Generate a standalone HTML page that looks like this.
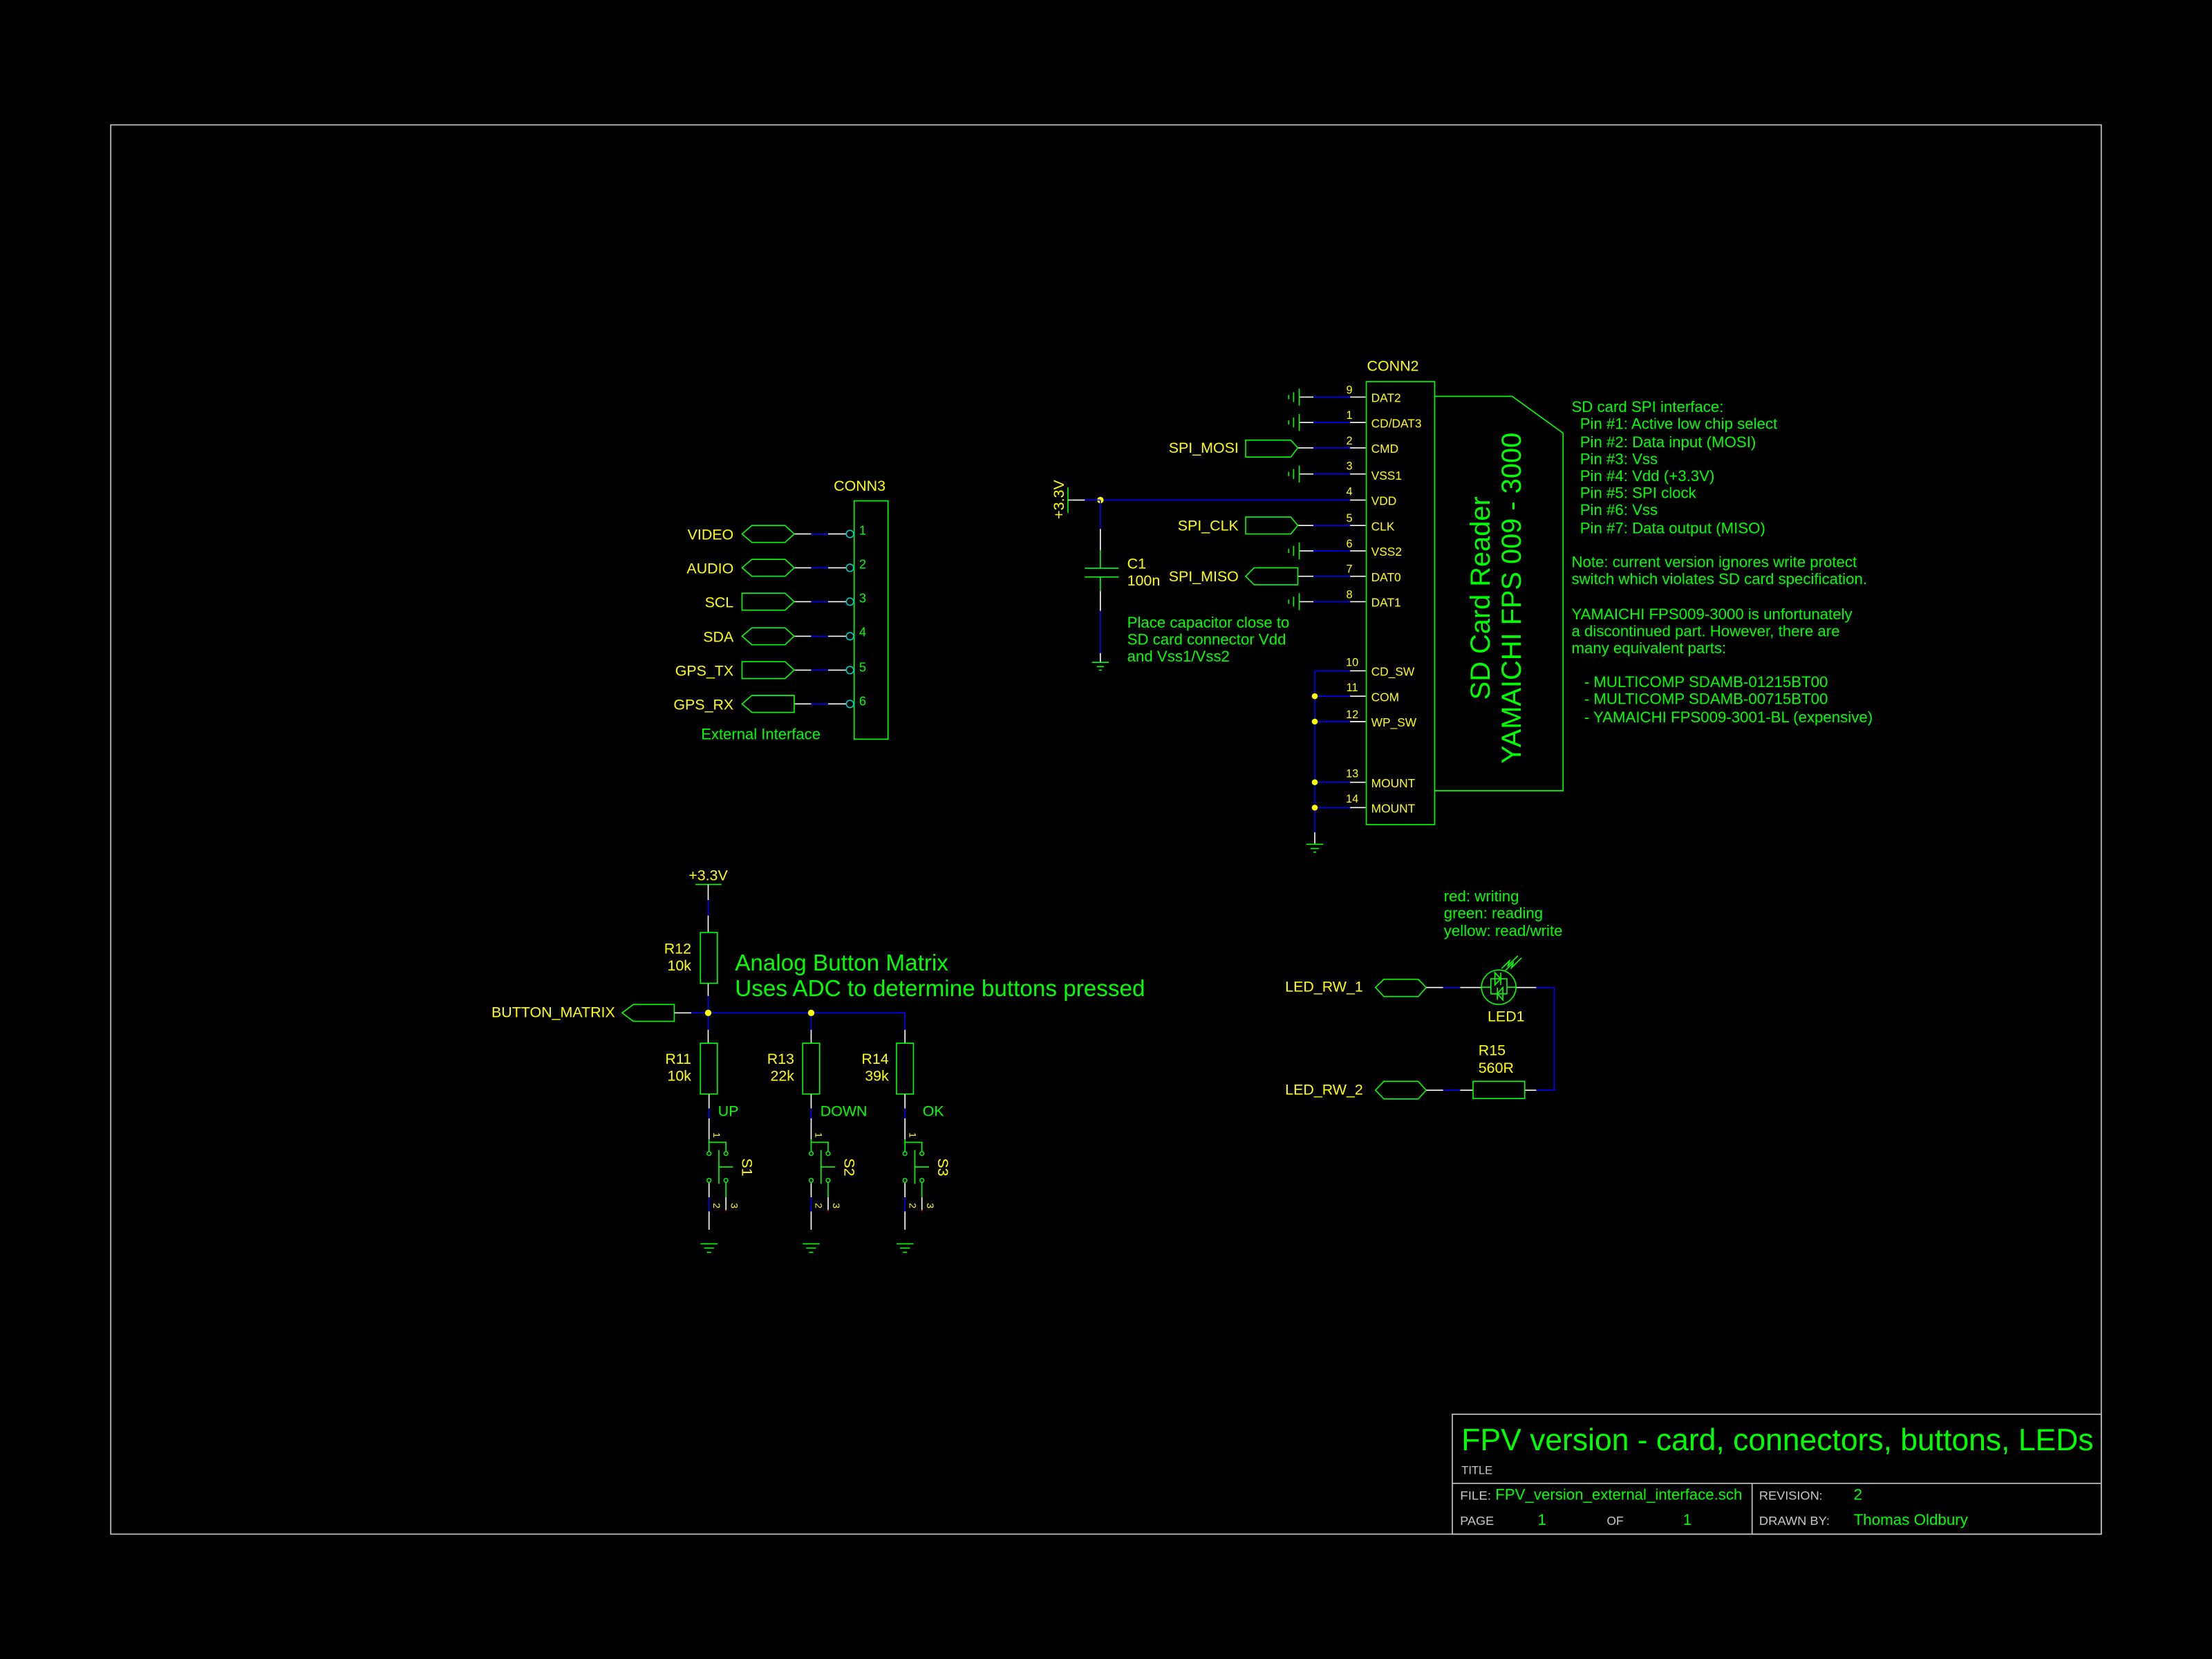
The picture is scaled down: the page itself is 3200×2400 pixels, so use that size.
<!DOCTYPE html>
<html><head><meta charset="utf-8"><style>
html,body{margin:0;padding:0;background:#000;}
svg{display:block;}
text{font-family:"Liberation Sans",sans-serif;}
.y{fill:#ffff00;}
.g{fill:#00ff00;}
.gr{fill:#c8c8c8;}
</style></head><body>
<svg width="3200" height="2400" viewBox="0 0 1568 1176" xmlns="http://www.w3.org/2000/svg">
<rect width="1568" height="1176" fill="#000"/>
<rect x="78.5" y="88.5" width="1411" height="999" fill="none" stroke="#c8c8c8" stroke-width="0.8"/>
<g stroke="#c8c8c8" stroke-width="0.8" fill="none">
<rect x="1029.5" y="1002.5" width="460" height="85"/>
<line x1="1029.5" y1="1051.5" x2="1489.5" y2="1051.5"/>
<line x1="1242" y1="1051.5" x2="1242" y2="1087.5"/>
</g>
<text x="1036" y="1028" class="g" font-size="22" textLength="448" lengthAdjust="spacingAndGlyphs">FPV version - card, connectors, buttons, LEDs</text>
<text x="1036" y="1045" class="gr" font-size="8" textLength="22" lengthAdjust="spacingAndGlyphs">TITLE</text>
<text x="1035" y="1063" class="gr" font-size="8.5" textLength="22" lengthAdjust="spacingAndGlyphs">FILE:</text>
<text x="1060" y="1063" class="g" font-size="11" textLength="175" lengthAdjust="spacingAndGlyphs">FPV_version_external_interface.sch</text>
<text x="1247" y="1063" class="gr" font-size="8.5" textLength="45" lengthAdjust="spacingAndGlyphs">REVISION:</text>
<text x="1314" y="1063" class="g" font-size="11">2</text>
<text x="1035" y="1081" class="gr" font-size="8.5" textLength="24" lengthAdjust="spacingAndGlyphs">PAGE</text>
<text x="1090" y="1081" class="g" font-size="11">1</text>
<text x="1139" y="1081" class="gr" font-size="8.5">OF</text>
<text x="1193" y="1081" class="g" font-size="11">1</text>
<text x="1247" y="1081" class="gr" font-size="8.5" textLength="50" lengthAdjust="spacingAndGlyphs">DRAWN BY:</text>
<text x="1314" y="1081" class="g" font-size="11" textLength="81" lengthAdjust="spacingAndGlyphs">Thomas Oldbury</text>

<text x="969" y="263" class="y" font-size="10.5">CONN2</text>
<rect x="968.5" y="270.5" width="48.5" height="314" fill="none" stroke="#00ff00" stroke-width="0.8"/>
<polyline points="1017,281 1072,281 1108,307 1108,560.5 1017,560.5" fill="none" stroke="#00ff00" stroke-width="0.8"/>
<text transform="translate(1056,424) rotate(-90)" text-anchor="middle" class="g" font-size="19.5">SD Card Reader</text>
<text transform="translate(1078,424) rotate(-90)" text-anchor="middle" class="g" font-size="19.5">YAMAICHI FPS 009 - 3000</text>

<g font-size="8.5" class="y">
<text x="972" y="285">DAT2</text>
<text x="972" y="303">CD/DAT3</text>
<text x="972" y="321">CMD</text>
<text x="972" y="340">VSS1</text>
<text x="972" y="358">VDD</text>
<text x="972" y="376">CLK</text>
<text x="972" y="394">VSS2</text>
<text x="972" y="412">DAT0</text>
<text x="972" y="430">DAT1</text>
<text x="972" y="479">CD_SW</text>
<text x="972" y="497">COM</text>
<text x="972" y="515">WP_SW</text>
<text x="972" y="558">MOUNT</text>
<text x="972" y="576">MOUNT</text>
</g>
<g font-size="8" class="y" text-anchor="middle">
<text x="956.5" y="279">9</text>
<text x="956.5" y="297">1</text>
<text x="956.5" y="315">2</text>
<text x="956.5" y="333">3</text>
<text x="956.5" y="351">4</text>
<text x="956.5" y="370">5</text>
<text x="956.5" y="388">6</text>
<text x="956.5" y="406">7</text>
<text x="956.5" y="424">8</text>
<text x="958.5" y="472">10</text>
<text x="958.5" y="490">11</text>
<text x="958.5" y="509">12</text>
<text x="958.5" y="551">13</text>
<text x="958.5" y="569">14</text>
</g>
<g stroke-width="0.8">
<g stroke="#ffffff">
<path d="M957 281.5H968M957 299.5H968M957 317.5H968M957 336H968M957 354.5H968M957 372.5H968M957 390.5H968M957 408.5H968M957 426.5H968M957 475.5H968M957 493.5H968M957 511.5H968M957 554.5H968M957 572.5H968"/>
<path d="M921 281.5H931M921 299.5H931M921 336H931M921 390.5H931M921 426.5H931M920 317.5H931M920 372.5H931M920 408.5H931"/>
</g>
<g stroke="#0000ff">
<path d="M931 281.5H957M931 299.5H957M931 317.5H957M931 336H957M931 372.5H957M931 390.5H957M931 408.5H957M931 426.5H957"/>
<path d="M780 354.5H957"/>
<path d="M932 475.5H957M932 493.5H957M932 511.5H957M932 554.5H957M932 572.5H957"/>
<path d="M932 475.5V590"/>
</g>
<g stroke="#00ff00">
<path d="M921 275.5v12M917 278v7M913.5 280v3"/>
<path d="M921 293.5v12M917 296v7M913.5 298v3"/>
<path d="M921 330v12M917 332.5v7M913.5 334.5v3"/>
<path d="M921 384.5v12M917 387v7M913.5 389v3"/>
<path d="M921 420.5v12M917 423v7M913.5 425v3"/>
</g>
<path d="M932 590V598" stroke="#ffffff"/>
<g stroke="#00ff00"><path d="M926 598.5h12M929 601.5h6M931 604h2"/></g>
</g>
<g fill="#ffff00">
<circle cx="932" cy="493.5" r="2.1"/><circle cx="932" cy="511.5" r="2.1"/><circle cx="932" cy="554.5" r="2.1"/><circle cx="932" cy="572.5" r="2.1"/>
<circle cx="780" cy="354.5" r="2.3"/>
</g>
<g fill="none" stroke="#00ff00" stroke-width="0.8">
<polygon points="883,312 915,312 920,317.5 915,324 883,324"/>
<polygon points="883,366.5 915,366.5 920,372.5 915,378.5 883,378.5"/>
<polygon points="883,408.5 889,402.5 920,402.5 920,414.5 889,414.5"/>
</g>
<g font-size="10.5" class="y" text-anchor="end">
<text x="878" y="321">SPI_MOSI</text>
<text x="878" y="376">SPI_CLK</text>
<text x="878" y="412">SPI_MISO</text>
</g>
<g stroke-width="0.8">
<path d="M757 345.5V363.5" stroke="#00ff00"/>
<path d="M757 354.5H769" stroke="#ffffff"/>
<path d="M769 354.5H780" stroke="#0000ff"/>
<path d="M780 354.5V375M780 433V463" stroke="#0000ff"/>
<path d="M780 375V390M780 419V433M780 463V469.5" stroke="#ffffff"/>
<path d="M780 390V402.8M780 409V419" stroke="#00ff00"/>
<path d="M769 402.8H793M769 409H793" stroke="#00ff00"/>
<path d="M774 469.5H786M777.5 472.5H782.5M779 475H781" stroke="#00ff00"/>
</g>
<text transform="translate(754,354) rotate(-90)" text-anchor="middle" class="y" font-size="10.5">+3.3V</text>
<text x="799" y="403" class="y" font-size="10.5">C1</text>
<text x="799" y="415" class="y" font-size="10.5">100n</text>
<g font-size="10.9" class="g">
<text x="799" y="445">Place capacitor close to</text>
<text x="799" y="457">SD card connector Vdd</text>
<text x="799" y="469">and Vss1/Vss2</text>
</g>
<g font-size="10.9" class="g" style="white-space:pre">
<text x="1114" y="292">SD card SPI interface:</text>
<text x="1120" y="304">Pin #1: Active low chip select</text>
<text x="1120" y="317">Pin #2: Data input (MOSI)</text>
<text x="1120" y="329">Pin #3: Vss</text>
<text x="1120" y="341">Pin #4: Vdd (+3.3V)</text>
<text x="1120" y="353">Pin #5: SPI clock</text>
<text x="1120" y="365">Pin #6: Vss</text>
<text x="1120" y="378">Pin #7: Data output (MISO)</text>
<text x="1114" y="402">Note: current version ignores write protect</text>
<text x="1114" y="414">switch which violates SD card specification.</text>
<text x="1114" y="439">YAMAICHI FPS009-3000 is unfortunately</text>
<text x="1114" y="451">a discontinued part. However, there are</text>
<text x="1114" y="463">many equivalent parts:</text>
<text x="1123" y="487">- MULTICOMP SDAMB-01215BT00</text>
<text x="1123" y="499">- MULTICOMP SDAMB-00715BT00</text>
<text x="1123" y="512">- YAMAICHI FPS009-3001-BL (expensive)</text>
</g>

<text x="591" y="348" class="y" font-size="10.5">CONN3</text>
<rect x="605.5" y="355" width="24" height="169" fill="none" stroke="#00ff00" stroke-width="0.8"/>
<g stroke-width="0.8">
<g stroke="#ffffff"><path d="M563 378.5H575M587 378.5H599.5M563 402.5H575M587 402.5H599.5M563 426.5H575M587 426.5H599.5M563 451H575M587 451H599.5M563 475H575M587 475H599.5M563 499H575M587 499H599.5"/></g>
<g stroke="#0000ff"><path d="M575 378.5H587M575 402.5H587M575 426.5H587M575 451H587M575 475H587M575 499H587"/></g>
<g fill="none" stroke="#00c8c8"><circle cx="602.5" cy="378.5" r="2.6"/><circle cx="602.5" cy="402.5" r="2.6"/><circle cx="602.5" cy="426.5" r="2.6"/><circle cx="602.5" cy="451" r="2.6"/><circle cx="602.5" cy="475" r="2.6"/><circle cx="602.5" cy="499" r="2.6"/></g>
<g fill="none" stroke="#00ff00">
<polygon points="526,378.5 533,372.5 556.5,372.5 563,378.5 556.5,384.5 533,384.5"/>
<polygon points="526,402.5 533,396.5 556.5,396.5 563,402.5 556.5,408.5 533,408.5"/>
<polygon points="526,420.5 556.5,420.5 563,426.5 556.5,432.5 526,432.5"/>
<polygon points="526,451 533,445 556.5,445 563,451 556.5,457 533,457"/>
<polygon points="526,469 556.5,469 563,475 556.5,481 526,481"/>
<polygon points="526,499 533,493 563,493 563,505 533,505"/>
</g>
</g>
<g font-size="9" class="g">
<text x="609" y="379">1</text><text x="609" y="403">2</text><text x="609" y="427">3</text><text x="609" y="451">4</text><text x="609" y="476">5</text><text x="609" y="500">6</text>
</g>
<g font-size="10.5" class="y" text-anchor="end">
<text x="520" y="382.5">VIDEO</text>
<text x="520" y="406.5">AUDIO</text>
<text x="520" y="430.5">SCL</text>
<text x="520" y="455">SDA</text>
<text x="520" y="479">GPS_TX</text>
<text x="520" y="503">GPS_RX</text>
</g>
<text x="497" y="524" class="g" font-size="10.8">External Interface</text>

<text x="502" y="624" text-anchor="middle" class="y" font-size="10.5">+3.3V</text>
<g stroke-width="0.8">
<path d="M493 627H511.5" stroke="#00ff00"/>
<path d="M502 627V638M502 649V661M502 697V706" stroke="#ffffff"/>
<path d="M502 638V649M502 706V718" stroke="#0000ff"/>
<rect x="496.5" y="661" width="12" height="36" fill="none" stroke="#00ff00"/>
<polygon points="441,718 449,712 478,712 478,724 449,724" fill="none" stroke="#00ff00"/>
<path d="M478 718H490" stroke="#ffffff"/>
<path d="M490 718H641.5V730M502 718V730M575 718V730" stroke="#0000ff"/>
<path d="M502 730V739.5M575 730V739.5M641.5 730V739.5" stroke="#ffffff"/>
<g fill="none" stroke="#00ff00">
<rect x="496.5" y="739.5" width="12" height="36"/>
<rect x="569" y="739.5" width="12" height="36"/>
<rect x="635.5" y="739.5" width="12" height="36"/>
</g>
</g>
<g fill="#ffff00"><circle cx="502" cy="718" r="2.3"/><circle cx="575" cy="718" r="2.3"/></g>
<text x="521" y="688" class="g" font-size="16.3">Analog Button Matrix</text>
<text x="521" y="706" class="g" font-size="16.3">Uses ADC to determine buttons pressed</text>
<text x="436" y="721" text-anchor="end" class="y" font-size="10.5">BUTTON_MATRIX</text>
<g font-size="10.5" class="y" text-anchor="end">
<text x="490" y="676">R12</text><text x="490" y="688">10k</text>
<text x="490" y="754">R11</text><text x="490" y="766">10k</text>
<text x="563" y="754">R13</text><text x="563" y="766">22k</text>
<text x="630" y="754">R14</text><text x="630" y="766">39k</text>
</g>
<g font-size="10.5" class="g">
<text x="509" y="791">UP</text>
<text x="581.5" y="791">DOWN</text>
<text x="654" y="791">OK</text>
</g>

<defs>
<g id="sw">
<path d="M0 0V10M0 17V32M0 63V73M0 83V96" stroke="#ffffff" stroke-width="0.8"/>
<path d="M0 10V17M0 73V83" stroke="#0000ff" stroke-width="0.8"/>
<path d="M0 32V40.5M0 34H12V40.5M0 62V63M12 62V73" stroke="#00ff00" stroke-width="0.8" fill="none"/>
<path d="M12 73V82" stroke="#ffffff" stroke-width="0.8"/>
<path d="M12 82V83" stroke="#ff0000" stroke-width="0.8"/>
<circle cx="0" cy="42" r="1.4" fill="none" stroke="#00ff00" stroke-width="0.7"/>
<circle cx="12" cy="42" r="1.4" fill="none" stroke="#00ff00" stroke-width="0.7"/>
<circle cx="0" cy="61" r="1.4" fill="none" stroke="#00ff00" stroke-width="0.7"/>
<circle cx="12" cy="61" r="1.4" fill="none" stroke="#00ff00" stroke-width="0.7"/>
<path d="M7 39.5V63.5M7 51.5H17" stroke="#00ff00" stroke-width="0.8"/>
<path d="M-6 106H6M-3.5 109H3.5M-1.5 112H1.5" stroke="#00ff00" stroke-width="0.8"/>
<text transform="translate(3,27) rotate(90)" class="y" font-size="7">1</text>
<text transform="translate(3,77) rotate(90)" class="y" font-size="7">2</text>
<text transform="translate(15.5,77) rotate(90)" class="y" font-size="7">3</text>
</g>
</defs>
<use href="#sw" x="502.6" y="775.7"/>
<use href="#sw" x="575" y="775.7"/>
<use href="#sw" x="641.5" y="775.7"/>
<g font-size="10.5" class="y">
<text transform="translate(526,821) rotate(90)">S1</text>
<text transform="translate(598.5,821) rotate(90)">S2</text>
<text transform="translate(665,821) rotate(90)">S3</text>
</g>

<g font-size="10.9" class="g">
<text x="1023.5" y="639">red: writing</text>
<text x="1023.5" y="651">green: reading</text>
<text x="1023.5" y="663.5">yellow: read/write</text>
</g>
<text x="911" y="703" class="y" font-size="10.5">LED_RW_1</text>
<text x="911" y="776" class="y" font-size="10.5">LED_RW_2</text>
<text x="1054.5" y="724" class="y" font-size="10.5">LED1</text>
<text x="1048" y="748" class="y" font-size="10.5">R15</text>
<text x="1048" y="760.5" class="y" font-size="10.5">560R</text>
<g stroke-width="0.8" fill="none">
<polygon points="975,700 981,694.2 1005.3,694.2 1011,700 1005.3,706.4 981,706.4" stroke="#00ff00"/>
<polygon points="975,772.8 981,766.5 1005.3,766.5 1011,772.8 1005.3,779 981,779" stroke="#00ff00"/>
<path d="M1011 700H1023M1035 700H1050M1074.5 700H1089M1011 772.8H1023M1035 772.8H1044.2M1080.8 772.8H1089" stroke="#ffffff"/>
<path d="M1023 700H1035M1089 700H1101.7V772.8H1089M1023 772.8H1035" stroke="#0000ff"/>
<rect x="1044.2" y="766.5" width="36.6" height="12.2" stroke="#00ff00"/>
<circle cx="1062.4" cy="699.8" r="12.2" stroke="#00ff00"/>
<g stroke="#00ff00">
<path d="M1050 699.8H1056.8M1068.2 699.8H1074.6"/>
<path d="M1056.8 693.8H1068.2V704.5H1056.8Z"/>
<path d="M1059.7 689.5L1063.8 693.8L1059.7 698.2Z M1063.8 689.5V698.2"/>
<path d="M1065.3 700L1061.4 704.4L1065.3 708.8Z M1061.4 700V708.8"/>
<path d="M1064.5 686.5L1070 681L1069 684.5L1076 677.5M1067 688L1072.5 682.5L1071.5 686L1078.5 679"/>
</g>
</g>
</svg>
</body></html>
